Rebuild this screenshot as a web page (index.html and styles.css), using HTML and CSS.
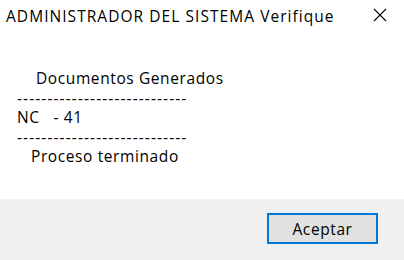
FILE: index.html
```html
<!DOCTYPE html>
<html lang="es">
<head>
<meta charset="utf-8">
<link rel="stylesheet" href="styles.css">
</head>
<body>
<div class="dialog">
  <div class="titlebar">
    <span class="title">ADMINISTRADOR DEL SISTEMA Verifique</span>
    <svg class="close" width="14" height="14" viewBox="0 0 14 14"><path d="M1 1 L13 13 M13 1 L1 13" stroke="#000" stroke-width="1.1" fill="none"/></svg>
  </div>
  <div class="content">
    <div class="msg"><span class="l1">Documentos Generados</span>
<span class="dash">----------------------------</span>
<span>NC&nbsp;&nbsp;&nbsp;- 41</span>
<span class="dash">----------------------------</span>
<span class="l5">Proceso terminado</span></div>
  </div>
  <div class="footer">
    <button class="btn">Aceptar</button>
  </div>
</div>
</body>
</html>
```
FILE: styles.css
```css
html, body {
  margin: 0;
  padding: 0;
  background: #ffffff;
}
.dialog {
  width: 404px;
  height: 260px;
  display: flex;
  flex-direction: column;
  font-family: "Open Sans", "Noto Sans", sans-serif;
  color: #000;
}
.titlebar {
  height: 30px;
  display: flex;
  align-items: center;
  justify-content: space-between;
  padding: 0 17px 0 6px;
}
.title {
  font-size: 15.5px;
  letter-spacing: 1.05px;
  margin-top: 1px;
  white-space: nowrap;
}
.close {
  display: block;
}
.content {
  flex: 1;
  padding: 39px 0 0 17px;
}
.msg {
  display: flex;
  flex-direction: column;
  font-size: 15.5px;
  line-height: 19.5px;
  letter-spacing: 0.6px;
}
.msg span {
  display: block;
  height: 19.5px;
  white-space: nowrap;
}
.msg .l1 { padding-left: 19px; }
.msg .l5 { padding-left: 14px; }
.msg .dash { letter-spacing: 1.1px; }
.footer {
  height: 61px;
  background: #f0f0f0;
  display: flex;
  justify-content: flex-end;
  align-items: flex-start;
  padding: 14px 26px 0 0;
  box-sizing: border-box;
}
.btn {
  width: 111px;
  height: 31px;
  border: 2px solid #0078d7;
  background: #e1e1e1;
  font-family: "Open Sans", "Noto Sans", sans-serif;
  font-size: 15.5px;
  letter-spacing: 0.6px;
  color: #000;
  padding: 0;
}
```
